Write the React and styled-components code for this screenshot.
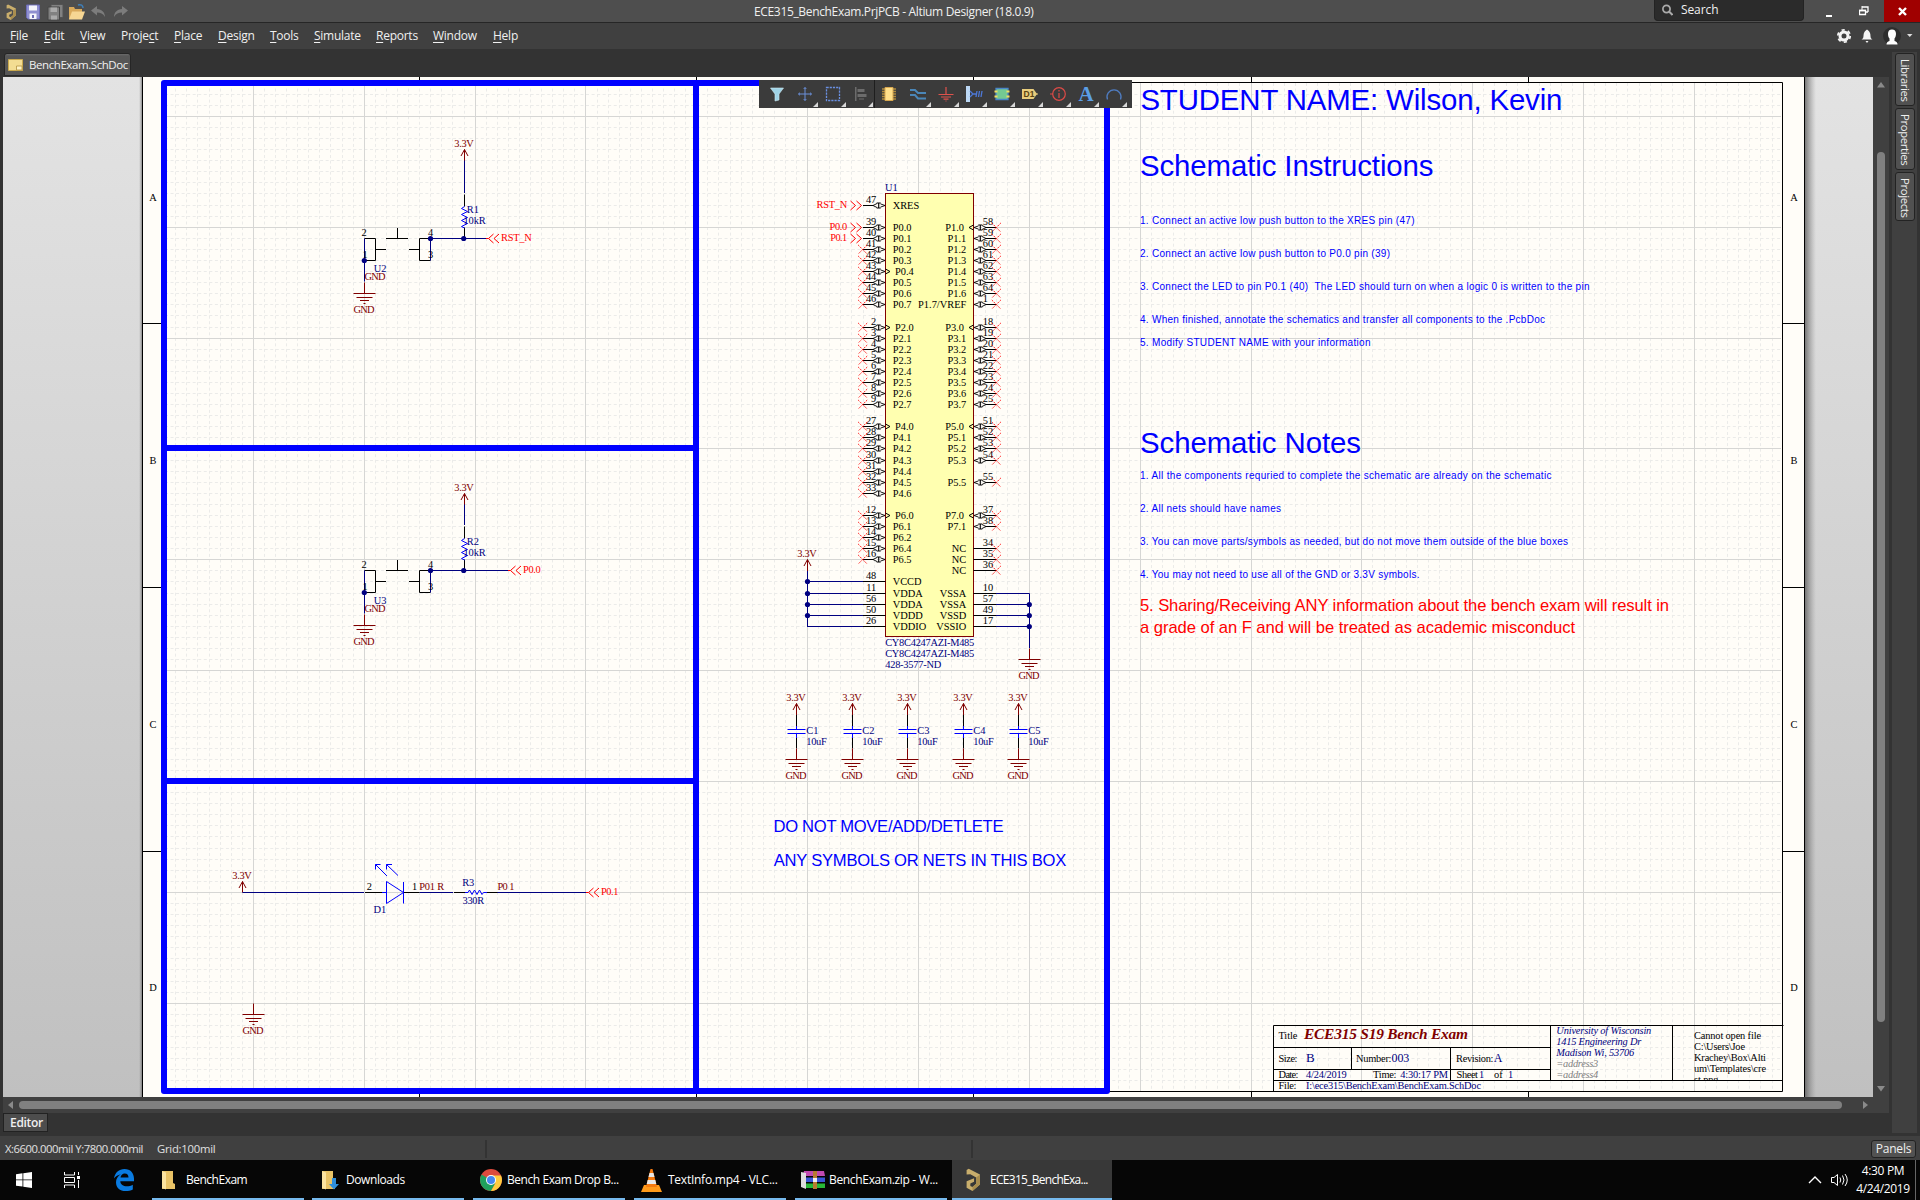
import React from 'react';
import styled, { createGlobalStyle } from 'styled-components';

const Global = createGlobalStyle`
  * { box-sizing: border-box; }
  body { margin: 0; background: #333; overflow: hidden; }
`;

const Screen = styled.div`
  width: 1920px;
  height: 1200px;
  display: flex;
  flex-direction: column;
  background: #333;
  color: #f0f0f0;
  font: 12px/16px "Open Sans", "Noto Sans", sans-serif;
  letter-spacing: -0.3px;
  white-space: nowrap;
  overflow: hidden;
`;

/* ---------- title bar ---------- */

const TitleBar = styled.header`
  height: 23px;
  flex: none;
  display: grid;
  grid-template-columns: 754px 1fr auto;
  background: #4e4e4e;
  border-bottom: 1px solid #262626;
`;
const QuickBar = styled.div`
  display: flex;
  align-items: center;
  padding-left: 3px;
`;
const QuickIcon = styled.svg`
  width: ${(p) => p.$w || 22}px;
  height: 18px;
  flex: none;
`;
const WindowTitle = styled.div`
  line-height: 23px;
  letter-spacing: -0.34px;
`;
const TitleRight = styled.div`
  display: flex;
  height: 22px;
`;
const SearchBox = styled.div`
  width: 150px;
  height: 21px;
  display: flex;
  align-items: center;
  gap: 8px;
  padding: 0 0 1px 7px;
  background: #2b2b2b;
  border: 1px solid #232323;
  border-top: 0;
  border-radius: 0 0 4px 4px;
  letter-spacing: -0.1px;
  margin-right: 10px;
`;
const WinButton = styled.div`
  width: ${(p) => p.$w}px;
  height: 22px;
  display: flex;
  align-items: center;
  justify-content: center;
  background: ${(p) => p.$bg || 'transparent'};
`;

/* ---------- menu bar ---------- */

const MenuBar = styled.nav`
  height: 26px;
  flex: none;
  display: flex;
  align-items: center;
  justify-content: space-between;
  padding: 0 4px 0 10px;
  background: #404040;
`;
const MenuList = styled.div`
  display: flex;
  gap: 16px;
`;
const MenuItem = styled.span`
  width: ${(p) => p.$w}px;
  letter-spacing: -0.25px;
  u { text-underline-offset: 2px; text-decoration-thickness: 1px; }
`;
const UserTools = styled.div`
  display: flex;
  align-items: center;
  height: 26px;
`;

/* ---------- workspace ---------- */

const Workspace = styled.div`
  height: 1087px;
  flex: none;
  display: flex;
`;
const Main = styled.div`
  width: 1889px;
  display: flex;
  flex-direction: column;
`;
const TabStrip = styled.div`
  height: 28px;
  flex: none;
  padding: 4px 0 0 4px;
`;
const DocTab = styled.div`
  width: 127px;
  height: 23px;
  display: flex;
  align-items: center;
  gap: 6px;
  padding-left: 3px;
  border: 1px solid #262626;
  border-radius: 3px 3px 0 0;
  background: linear-gradient(#6a6a6a 0, #575757 2px, #565656 100%);
  font-size: 11.5px;
  letter-spacing: -0.42px;
`;
const View = styled.div`
  height: 1036px;
  flex: none;
  display: grid;
  grid-template-columns: 1870px 16px;
  grid-template-rows: 1020px 16px;
  padding-left: 3px;
  box-sizing: content-box;
`;
const Canvas = styled.div`
  position: relative;
  background: linear-gradient(#e3e3e3, #c0c0c0);
  overflow: hidden;
`;
const Sheet = styled.svg`
  display: block;
  width: 1870px;
  height: 1020px;
`;
const VScroll = styled.div`
  grid-row: 1 / 3;
  grid-column: 2;
  background: #404040;
  display: flex;
  flex-direction: column;
  align-items: center;
  padding-top: 5px;
`;
const VThumb = styled.div`
  width: 8px;
  height: 870px;
  flex: none;
  margin: 64px 0;
  border-radius: 4px;
  background: #808080;
`;
const HScroll = styled.div`
  background: #404040;
  display: flex;
  align-items: center;
  padding-left: 4px;
`;
const HThumb = styled.div`
  width: 1823px;
  height: 8px;
  flex: none;
  margin: 0 21px 0 4px;
  border-radius: 4px;
  background: #808080;
`;
const Arrow = styled.svg`
  width: 8px;
  height: 6px;
  flex: none;
  overflow: visible;
`;
const EditorStrip = styled.div`
  height: 23px;
  padding-left: 3px;
`;
const EditorTab = styled.div`
  width: 45px;
  height: 19px;
  line-height: 17px;
  padding-left: 6px;
  border: 1px solid #222;
  background: #4d4d4d;
  font-weight: 600;
  letter-spacing: -0.3px;
`;
const SideBar = styled.aside`
  width: 25px;
  height: 1081px;
  margin: 3px 0 0 3px;
  padding: 1px 2px 0 3px;
  background: #404040;
  display: flex;
  flex-direction: column;
  gap: 2px;
`;
const SideTab = styled.div`
  width: 20px;
  height: ${(p) => p.$h}px;
  writing-mode: vertical-rl;
  line-height: 17px;
  padding-top: 5px;
  border: 1px solid #232323;
  border-radius: 3px;
  background: #515151;
  font-size: 11.3px;
  letter-spacing: -0.35px;
`;

/* ---------- floating toolbar ---------- */

const ToolBar = styled.div`
  position: absolute;
  left: 756px;
  top: 3px;
  width: 373px;
  height: 28px;
  display: flex;
  padding-left: 4px;
  background: #3b3b3b;
`;
const Tool = styled.div`
  width: 28.1px;
  height: 28px;
  position: relative;
  display: flex;
  align-items: center;
  justify-content: center;
  border-right: ${(p) => (p.$sep ? '1px solid #1e1e1e' : '0')};
  &::after {
    content: '';
    display: ${(p) => (p.$menu ? 'block' : 'none')};
    position: absolute;
    right: 1px;
    bottom: 1px;
    border-left: 5px solid transparent;
    border-bottom: 5px solid #d8d8d8;
  }
`;

/* ---------- status bar ---------- */

const StatusBar = styled.div`
  height: 24px;
  flex: none;
  display: flex;
  align-items: center;
  padding: 1px 4px 0 5px;
  background: #404040;
`;
const StatusText = styled.span`
  width: ${(p) => p.$w}px;
  color: #e0e0e0;
  font-size: 11.3px;
  letter-spacing: ${(p) => p.$ls}px;
`;
const Divider = styled.i`
  width: 2px;
  height: 18px;
  margin-right: ${(p) => p.$mr}px;
  background: #333;
`;
const PanelsButton = styled.div`
  width: 45px;
  height: 18px;
  margin-left: auto;
  line-height: 16px;
  text-align: center;
  border: 1px solid #222;
  border-radius: 3px;
  background: #525252;
  letter-spacing: -0.2px;
`;

/* ---------- task bar ---------- */

const TaskBar = styled.footer`
  height: 40px;
  flex: none;
  display: flex;
  align-items: stretch;
  background: #060606;
  color: #fff;
`;
const TaskIcon = styled.div`
  width: ${(p) => p.$w}px;
  display: flex;
  align-items: center;
  justify-content: center;
`;
const TaskItem = styled.div`
  width: ${(p) => p.$w}px;
  margin-right: ${(p) => p.$mr}px;
  display: flex;
  align-items: center;
  gap: ${(p) => p.$gap}px;
  padding: 2px 0 0 ${(p) => p.$pl}px;
  border-bottom: 2px solid #76b9ed;
  background: ${(p) => (p.$active ? '#383838' : 'transparent')};
  letter-spacing: ${(p) => p.$ls}px;
`;
const Tray = styled.div`
  margin-left: auto;
  display: flex;
  align-items: center;
`;
const Clock = styled.div`
  width: 64px;
  text-align: center;
  line-height: 18px;
  letter-spacing: -0.35px;
`;
const ShowDesktop = styled.div`
  width: 5px;
  height: 40px;
  border-left: 1px solid #666;
`;

/* ---------- schematic primitives ---------- */

const NAVY = '#000080';
const BLUE = '#0000ff';
const MAROON = '#800000';
const RED = '#ff0000';
const U = 11.085;
const snap = (v) => Math.floor(v) + 0.5;

const Txt = styled.text`
  font-family: ${(p) => (p.$sans ? '"Liberation Sans", Arial, sans-serif' : '"Liberation Serif", "Times New Roman", serif')};
  font-size: ${(p) => p.$size || 10.4}px;
  font-style: ${(p) => (p.$italic ? 'italic' : 'normal')};
  font-weight: ${(p) => (p.$bold ? 700 : 400)};
  letter-spacing: 0;
  white-space: pre;
`;
const T = ({ x, y, c = '#000', w, a, children, ...rest }) => (
  <Txt x={x} y={y} fill={c} textAnchor={a} textLength={w} {...rest}>{children}</Txt>
);
const L = ({ d, c = '#000', w = 1 }) => <path d={d} fill="none" stroke={c} strokeWidth={w} />;
const Dot = ({ x, y }) => <circle cx={x} cy={y} r="2.6" fill={NAVY} />;

function Grid() {
  const minor = [];
  for (let i = -8; i < 146; i++) {
    const x = snap(253.4 + i * U);
    if (i % 10 && x > 166 && x < 1781) minor.push(`M${x} 83V1091`);
  }
  for (let i = -3; i < 88; i++) {
    const y = snap(116.4 + i * U);
    if (i % 10 && y > 84 && y < 1090) minor.push(`M165 ${y}H1781`);
  }
  const major = [];
  for (let i = 0; i < 14; i++) major.push(`M${snap(253.4 + i * 10 * U)} 83V1091`);
  for (let i = 0; i < 9; i++) major.push(`M165 ${snap(116.4 + i * 10 * U)}H1781`);
  return (
    <>
      <path d={minor.join('')} stroke="#ebebe9" strokeDasharray="3 2.54" fill="none" />
      <path d={major.join('')} stroke="#d6d6d4" fill="none" />
    </>
  );
}

function Power({ x, y, len = 11.5 }) {
  return (
    <>
      <T x={x - 0.4} y={y - 2.6} c={MAROON} a="middle" w={19.5}>3.3V</T>
      <L c={MAROON} d={`M${x} ${y}V${y + len}M${x - 3.5} ${y + 6.5}L${x} ${y}L${x + 3.5} ${y + 6.5}`} />
    </>
  );
}

function Ground({ x, y }) {
  return (
    <>
      <L c={MAROON} d={`M${x} ${y - 11}V${y}M${x - 11} ${y}h22M${x - 8} ${y + 4}h16M${x - 4.5} ${y + 7}h9M${x - 1} ${y + 10}h2`} />
      <T x={x - 0.4} y={y + 19.4} c={MAROON} a="middle" w={21}>GND</T>
    </>
  );
}

function PortIn({ x, y, name, w }) {
  return (
    <>
      <L c={RED} d={`M${x} ${y}h2.5M${x + 7.5} ${y - 4.5}l-5 4.5l5 4.5M${x + 13} ${y - 4.5}l-5 4.5l5 4.5`} />
      <T x={x + 15} y={y + 2.8} c={RED} w={w}>{name}</T>
    </>
  );
}

function PortOut({ x, y, name, w }) {
  return (
    <>
      <L c={RED} d={`M${x} ${y}l-5 4.5M${x} ${y}l-5 -4.5M${x - 6} ${y}l-5 4.5M${x - 6} ${y}l-5 -4.5`} />
      <T x={x - 14.3} y={y + 2.8} c={RED} a="end" w={w}>{name}</T>
    </>
  );
}

function Button({ dy, powerY, portX, port, portW, r, u }) {
  const y = snap(238.3 + dy);
  return (
    <>
      <Power x={464.5} y={powerY} />
      <L c={NAVY} d={`M464.5 ${powerY + 11}V${y - 45.5}`} />
      <L d={`M464.5 ${y - 44}V${y - 32}M464.5 ${y - 11}V${y}`} />
      <L c={BLUE} d={`M464.5 ${y - 32}l-3 2l6 3l-6 3l6 3l-6 3l6 3l-6 3l3 1.5`} />
      <T x={466.8} y={y - 26} c={NAVY}>{r}</T>
      <T x={463.6} y={y - 14.4} c={NAVY} w={22}>10kR</T>
      <L d={`M364.5 ${y}h11v22h-11M375.5 ${y + 11}h10.5M386 ${y}h22M397.5 ${y}v-10.5M409 ${y + 11}h10.5M430.5 ${y}h-11v22h11`} />
      <L c={NAVY} d={`M364.5 ${y}V${y + 43}M430.5 ${y + 22}V${y}H${portX}`} />
      <T x={364} y={y - 2.8} a="middle">2</T>
      <T x={365} y={y + 19} a="middle">1</T>
      <T x={430.6} y={y - 2.8} a="middle">4</T>
      <T x={430.6} y={y + 19} a="middle">3</T>
      <Dot x={364.3} y={y + 22} />
      <Dot x={430.5} y={y} />
      <Dot x={463.7} y={y} />
      <T x={373.7} y={y + 33.5} c={NAVY}>{u}</T>
      <T x={364.4} y={y + 41.3} c={MAROON} w={21}>GND</T>
      <Ground x={364.5} y={y + 55} />
      <PortIn x={portX} y={y} name={port} w={portW} />
    </>
  );
}

const LEFT = [
  [1, 'XRES', 47, 'p'], [3, 'P0.0', 39, 'p'], [4, 'P0.1', 40, 'p'], [5, 'P0.2', 41], [6, 'P0.3', 42], [7, 'P0.4', 43, 'c'],
  [8, 'P0.5', 44], [9, 'P0.6', 45], [10, 'P0.7', 46], [12, 'P2.0', 2, 'c'], [13, 'P2.1', 3], [14, 'P2.2', 4],
  [15, 'P2.3', 5], [16, 'P2.4', 6], [17, 'P2.5', 7], [18, 'P2.6', 8], [19, 'P2.7', 9], [21, 'P4.0', 27, 'c'],
  [22, 'P4.1', 28], [23, 'P4.2', 29], [24, 'P4.3', 30], [25, 'P4.4', 31], [26, 'P4.5', 32], [27, 'P4.6', 33],
  [29, 'P6.0', 12, 'c'], [30, 'P6.1', 13], [31, 'P6.2', 14], [32, 'P6.4', 15], [33, 'P6.5', 16],
  [35, 'VCCD', 48, 'w'], [36, 'VDDA', 11, 'w'], [37, 'VDDA', 56, 'w'], [38, 'VDDD', 50, 'w'], [39, 'VDDIO', 26, 'w'],
];
const RIGHT = [
  [3, 'P1.0', 58, 'c'], [4, 'P1.1', 59], [5, 'P1.2', 60], [6, 'P1.3', 61], [7, 'P1.4', 62], [8, 'P1.5', 63], [9, 'P1.6', 64],
  [10, 'P1.7/VREF', 1], [12, 'P3.0', 18, 'c'], [13, 'P3.1', 19], [14, 'P3.2', 20], [15, 'P3.3', 21], [16, 'P3.4', 22],
  [17, 'P3.5', 23], [18, 'P3.6', 24], [19, 'P3.7', 25], [21, 'P5.0', 51, 'c'], [22, 'P5.1', 52], [23, 'P5.2', 53],
  [24, 'P5.3', 54], [26, 'P5.5', 55], [29, 'P7.0', 37, 'c'], [30, 'P7.1', 38], [32, 'NC', 34, 'n'], [33, 'NC', 35, 'n'],
  [34, 'NC', 36, 'n'], [36, 'VSSA', 10, 'w'], [37, 'VSSA', 57, 'w'], [38, 'VSSD', 49, 'w'], [39, 'VSSIO', 17, 'w'],
];
const rowY = (n) => snap(194 + n * U);

function NoErc({ x, y }) {
  return (
    <path d={`M${x - 4.5} ${y - 4.5}l9 9M${x + 4.5} ${y - 4.5}l-9 9`} stroke={RED} strokeWidth="1" strokeDasharray="1.5 1.1" fill="none" />
  );
}

function Pin({ side, row, name, num, kind }) {
  const y = rowY(row);
  const s = side === 'l' ? -1 : 1;
  const x = side === 'l' ? 885.5 : 973.5;
  const io = kind !== 'w' && kind !== 'n';
  const clk = kind === 'c' ? 2.3 : 0;
  return (
    <>
      <T x={x - s * (7.2 + clk)} y={y + 3.2} a={s < 0 ? 'start' : 'end'}>{name}</T>
      <T x={x + s * 9.2} y={y - 2.6} a={s < 0 ? 'end' : 'start'}>{num}</T>
      <L d={`M${x + s * 22.5} ${y}H${io ? x + s * 12 : x}`} />
      {io && (
        <>
          <path d={`M${x + s * 8.5} ${y - 2}L${x + s * 12.5} ${y}L${x + s * 8.5} ${y + 2}M${x + s * 5} ${y - 1.6}L${x + s * 0.5} ${y}L${x + s * 5} ${y + 1.6}`} fill="#fffdf8" stroke="#000" strokeWidth=".9" />
          <path d={`M${x + s * 6.8} ${y - 2.5}v5M${x + s * 6.8 - 2} ${y - 2.5}h4M${x + s * 6.8 - 2} ${y + 2.5}h4`} stroke="#000" strokeWidth="1.100" />
        </>
      )}
      {clk > 0 && <L d={`M${x} ${y - 2.5}L${x - s * 4.5} ${y}L${x} ${y + 2.5}`} />}
      {(kind === undefined || kind === 'c' || kind === 'n') && <NoErc x={x + s * 22.8} y={y} />}
    </>
  );
}

function Chip() {
  const wiresL = [35, 36, 37, 38, 39].map((n) => `M807.5 ${rowY(n)}H863`).join('');
  const wiresR = [36, 37, 38, 39].map((n) => `M996 ${rowY(n)}H1029.5`).join('');
  return (
    <>
      <rect x="885.5" y="193.5" width="88" height="443" fill="#ffffb0" stroke={MAROON} />
      <T x={885} y={190.5} c={NAVY}>U1</T>
      {LEFT.map((p) => <Pin key={p[2]} side="l" row={p[0]} name={p[1]} num={p[2]} kind={p[3]} />)}
      {RIGHT.map((p) => <Pin key={p[2]} side="r" row={p[0]} name={p[1]} num={p[2]} kind={p[3]} />)}
      <PortOut x={861.5} y={rowY(1)} name="RST_N" w={30.7} />
      <PortOut x={861.5} y={rowY(3)} name="P0.0" w={17.7} />
      <PortOut x={861.5} y={rowY(4)} name="P0.1" w={17} />
      <Power x={807.5} y={559.5} />
      <L c={NAVY} d={`M807.5 571V${rowY(39) + 0.5}${wiresL}${wiresR}M1029.5 ${rowY(36)}V648`} />
      {[35, 36, 37, 38].map((n) => <Dot key={n} x={807.5} y={rowY(n)} />)}
      {[37, 38, 39].map((n) => <Dot key={n} x={1029.3} y={rowY(n)} />)}
      <Ground x={1029.5} y={659.5} />
      <T x={885.2} y={646.2} c={NAVY} w={89}>CY8C4247AZI-M485</T>
      <T x={885.2} y={657.2} c={NAVY} w={89}>CY8C4247AZI-M485</T>
      <T x={885.2} y={668} c={NAVY} w={56}>428-3577-ND</T>
    </>
  );
}

function Cap({ x, name }) {
  return (
    <>
      <Power x={x} y={703.5} />
      <L d={`M${x} 715V726M${x} 738V748.5`} />
      <L c={BLUE} d={`M${x} 726V729.5M${x - 9} 729.5h18M${x - 9} 733.5h18M${x} 733.5V738`} />
      <Ground x={x} y={759.5} />
      <T x={x + 9.8} y={733.6} c={NAVY}>{name}</T>
      <T x={x + 9.8} y={744.6} c={NAVY} w={20.5}>10uF</T>
    </>
  );
}

function LedCircuit() {
  return (
    <>
      <Power x={242.5} y={881.5} len={11} />
      <L c={NAVY} d="M242.5 892.5H364M419.5 892.5H453M497 892.5H586" />
      <L d="M365 892.5H382M404 892.5H419.5M454 892.5H465M487 892.5H497.5" />
      <L c={BLUE} d="M382 892.5H386.5M386.5 881.5V903.5L403.5 892.5L386.5 881.5M403.5 882V903.5M465 892.5h3l1.5 -2.5l2.5 4.5l2.5 -4.5l2.5 4.5l2.5 -4.5l2.5 4.5l1.5 -2h3.5" />
      <L c={BLUE} d="M387 876L375.5 864.5M380.5 864.5H375.5V869.5M398 875.5L386.5 864.5M392 864.5H386.5V869.5" />
      <T x={366.7} y={889.8}>2</T>
      <T x={412} y={889.8}>1</T>
      <T x={419.2} y={889.8} c={MAROON} w={25}>P01 R</T>
      <T x={462.2} y={886.3} c={NAVY}>R3</T>
      <T x={462.6} y={904} c={NAVY} w={21.5}>330R</T>
      <T x={497.4} y={889.9} c={MAROON} w={17}>P0 1</T>
      <T x={373.5} y={913} c={NAVY}>D1</T>
      <PortIn x={586} y={892.5} name="P0.1" w={17.5} />
      <Ground x={253.5} y={1014.5} />
    </>
  );
}

const SMALL = [
  [224, 274.5, '1. Connect an active low push button to the XRES pin (47)'],
  [257, 250, '2. Connect an active low push button to P0.0 pin (39)'],
  [290, 449.5, '3. Connect the LED to pin P0.1 (40)  The LED should turn on when a logic 0 is written to the pin'],
  [323, 405, '4. When finished, annotate the schematics and transfer all components to the .PcbDoc'],
  [346, 230.5, '5. Modify STUDENT NAME with your information'],
  [479, 411.5, '1. All the components requried to complete the schematic are already on the schematic'],
  [512, 141, '2. All nets should have names'],
  [545, 428, '3. You can move parts/symbols as needed, but do not move them outside of the blue boxes'],
  [578, 279.5, '4. You may not need to use all of the GND or 3.3V symbols.'],
];

function Notes() {
  return (
    <>
      <T $sans $size={29.4} x={1140.4} y={110} c={BLUE} w={422}>STUDENT NAME: Wilson, Kevin</T>
      <T $sans $size={29.4} x={1140} y={176} c={BLUE} w={293.5}>Schematic Instructions</T>
      <T $sans $size={29.4} x={1140} y={453} c={BLUE} w={221}>Schematic Notes</T>
      {SMALL.map(([y, w, s]) => <T key={s} $sans $size={10} x={1140} y={y} c={BLUE} w={w}>{s}</T>)}
      <T $sans $size={16.6} x={1140} y={611} c={RED} w={529}>5. Sharing/Receiving ANY information about the bench exam will result in</T>
      <T $sans $size={16.6} x={1140} y={633} c={RED} w={435}>a grade of an F and will be treated as academic misconduct</T>
      <T $sans $size={16.6} x={773.5} y={832.3} c={BLUE} w={230}>DO NOT MOVE/ADD/DETLETE</T>
      <T $sans $size={16.6} x={773.8} y={866} c={BLUE} w={292.5}>ANY SYMBOLS OR NETS IN THIS BOX</T>
    </>
  );
}

function TitleBlock() {
  return (
    <>
      <L d="M1273.5 1091.5V1025.5H1783.5M1273.5 1047.5H1550.5M1273.5 1069.5H1550.5M1273.5 1080.5H1782.5M1351.5 1047.5V1069.5M1450.5 1047.5V1080.5M1550.5 1025.5V1080.5M1672.5 1025.5V1080.5" />
      <T x={1278.5} y={1039.3} w={18.8}>Title</T>
      <T x={1304} y={1039.3} $size={15.4} $bold $italic c={MAROON} w={164}>ECE315 S19 Bench Exam</T>
      <T x={1278.5} y={1061.7} w={19}>Size:</T>
      <T x={1306} y={1062.3} $size={13} c={NAVY}>B</T>
      <T x={1356} y={1061.7} w={35.5}>Number:</T>
      <T x={1391.6} y={1062} $size={12} c={NAVY} w={17.6}>003</T>
      <T x={1456} y={1061.7} w={37.5}>Revision:</T>
      <T x={1493.7} y={1062} $size={12} c={NAVY}>A</T>
      <T x={1278.5} y={1078} w={20}>Date:</T>
      <T x={1306} y={1078} c={NAVY} w={40.7}>4/24/2019</T>
      <T x={1373} y={1078} w={23.5}>Time:</T>
      <T x={1400.3} y={1078} c={NAVY} w={47.7}>4:30:17 PM</T>
      <T x={1456.5} y={1078} w={21.5}>Sheet</T>
      <T x={1479} y={1078} c={NAVY}>1</T>
      <T x={1494} y={1078}>of</T>
      <T x={1508} y={1078} c={NAVY}>1</T>
      <T x={1278.5} y={1089} w={18}>File:</T>
      <T x={1306} y={1089} c={NAVY} w={175}>{'I:\\ece315\\BenchExam\\BenchExam.SchDoc'}</T>
      <T x={1556.3} y={1034.3} $italic c={NAVY} w={95}>University of Wisconsin</T>
      <T x={1556.3} y={1045.3} $italic c={NAVY} w={85}>1415 Engineering Dr</T>
      <T x={1556.3} y={1056.3} $italic c={NAVY} w={78}>Madison Wi, 53706</T>
      <T x={1556.3} y={1067} $italic c="#808080" w={42}>=address3</T>
      <T x={1556.3} y={1078} $italic c="#808080" w={42}>=address4</T>
      <T x={1694} y={1038.8} w={67}>Cannot open file</T>
      <T x={1694} y={1050} w={51}>{'C:\\Users\\Joe'}</T>
      <T x={1694} y={1061} w={72}>{'Krachey\\Box\\Alti'}</T>
      <T x={1694} y={1072.3} w={72}>{'um\\Templates\\cre'}</T>
      <g clipPath="url(#pathClip)"><T x={1694} y={1083} w={24.5}>st.png</T></g>
    </>
  );
}

function Schematic() {
  const zonesX = [419.5, 696.5, 973.5, 1251.5, 1528.5];
  const zonesY = [323.5, 587.5, 851.5];
  return (
    <Sheet viewBox="3 77 1870 1020">
      <defs>
        <linearGradient id="shR"><stop offset="0" stopColor="#555" stopOpacity=".75" /><stop offset="1" stopColor="#888" stopOpacity="0" /></linearGradient>
        <linearGradient id="shL"><stop offset="0" stopColor="#888" stopOpacity="0" /><stop offset="1" stopColor="#555" stopOpacity=".6" /></linearGradient>
        <clipPath id="pathClip"><rect x="1690" y="1070" width="90" height="10" /></clipPath>
      </defs>
      <rect x="1805" y="77" width="11" height="1020" fill="url(#shR)" />
      <rect x="139" y="77" width="3" height="1020" fill="url(#shL)" />
      <rect x="142" y="77" width="1663" height="1020" fill="#fffdf8" />
      <Grid />
      <L d="M142.5 77V1097M1804.5 77V1097M164 82.5H1782.5V1091.5H164" />
      <L d={zonesX.map((x) => `M${x} 77V82M${x} 1091V1097`).join('') + zonesY.map((y) => `M143 ${y}H164M1782 ${y}H1804`).join('')} />
      {[['A', 200.8], ['B', 464], ['C', 727.7], ['D', 991]].map(([s, y]) => (
        <React.Fragment key={s}>
          <T x={153} y={y} a="middle">{s}</T>
          <T x={1794} y={y} a="middle">{s}</T>
        </React.Fragment>
      ))}
      <path d="M164 83H1107V1091H164ZM696 83V1091M164 448H696M164 781H696" fill="none" stroke={BLUE} strokeWidth="6" strokeLinejoin="round" />
      <Button dy={0} powerY={149.5} portX={486} port="RST_N" portW={30.7} r="R1" u="U2" />
      <Button dy={332.5} powerY={493.5} portX={508} port="P0.0" portW={17.7} r="R2" u="U3" />
      <LedCircuit />
      <Chip />
      {[796.5, 852.5, 907.5, 963.5, 1018.5].map((x, i) => <Cap key={x} x={x} name={`C${i + 1}`} />)}
      <Notes />
      <TitleBlock />
    </Sheet>
  );
}

/* ---------- icons ---------- */

const AltiumShape = () => (
  <>
    <path d="M1.500 6V1.800L3.500.8 14 6.200V15.500L7 21.500 1.500 18.500V12.500L8.500 9.500V12.800L5 14.500V16.800L7 17.800 10.500 14.800V8.800L5 5.800z" fill="#c9ae6c" />
    <path d="M10.500 8.800L14 6.200V15.500L7 21.500V17.800L10.500 14.800z" fill="#a98d4e" />
  </>
);
const AltiumLogo = ({ w }) => (
  <svg width={w} height={w * 1.5} viewBox="0 0 15 22.500"><AltiumShape /></svg>
);

const Floppy = ({ c, b }) => (
  <g>
    <path d="M.5.5h13v14H2L.5 13z" fill={c} stroke={b} />
    <path d="M3 1h8v5H3z" fill="#f4f4fa" />
    <path d="M3.500 9h7v5.500h-7z" fill="#f4f4fa" />
    <path d="M6 10.500h2v3H6z" fill={b} />
  </g>
);

const Folder = ({ arrow }) => (
  <svg width={arrow ? 19 : 15} height="20" viewBox={`0 0 ${arrow ? 19 : 15} 20`}>
    <path d="M1 1h11v12l2 1v5H1z" fill="#e9c366" />
    <path d="M1 1l4 1.500V19.500L1 18z" fill="#fbe3a0" />
    {arrow && <path d="M11 8h4v6h3l-5 5.500L8 14h3z" fill="#2f8fdc" />}
  </svg>
);

const tools = [
  ['filter', <path key="a" d="M1.500 2h13L10 8v6l-4 1V8z" fill="#9fd3e6" stroke="#cfe9f2" strokeWidth=".6" />],
  ['cross', <path key="a" d="M8 1.500v13M1.500 8h13M6.700 3L8 1.500 9.300 3M6.700 13L8 14.500 9.300 13M3 6.700L1.500 8 3 9.300M13 6.700L14.500 8 13 9.300" fill="none" stroke="#6a8fd8" strokeWidth="1" />, 1],
  ['select', <path key="a" d="M1.500 1.500h13v13h-13z" fill="none" stroke="#6a8fe0" strokeWidth="1.300" strokeDasharray="2.200 1" />, 1],
  ['align', <g key="a" fill="#6c6c6c"><path d="M2 1h1.500v14H2zM4.500 3h7v3h-7zM4.500 8h9v3h-9z" /><path d="M6 13h5" stroke="#6c6c6c" /></g>, 1, 1],
  ['part', <g key="a"><path d="M1 3h14M1 5.500h14M1 8h14M1 10.500h14M1 13h14" stroke="#b08a3c" strokeWidth="1.300" /><path d="M4 1.500h8v13H4z" fill="#ffdf8a" stroke="#d8a850" /></g>],
  ['wire', <path key="a" d="M0 4h5l3 3h8M0 9h5l3 3.500h8" fill="none" stroke="#4a86b8" strokeWidth="2" />, 1],
  ['gnd', <path key="a" d="M8 1v7M.5 8.500h15M3 11h10M5.500 13.200h5M7.500 15h1" stroke="#e0524c" strokeWidth="1.200" />, 1],
  ['port', <g key="a"><path d="M0 0h4v16H0z" fill="#bcd8f5" /><path d="M4 5l3 3-3 3M7 8h3M10 11l1-6M12.500 11l1-6M15 11l1-6" stroke="#4d78d8" fill="none" strokeWidth="1.300" /></g>, 1],
  ['sheet', <g key="a"><path d="M2 2.500h12v11H2z" fill="#74c992" stroke="#4a86c8" strokeWidth="1.300" /><path d="M.5 4.500h3v2h-3zM.5 9.500h3v2h-3zM12.500 4.500h3v2h-3zM12.500 9.500h3v2h-3z" fill="#f0e060" /></g>, 1],
  ['net', <g key="a"><path d="M0 3h11.500l3.500 5-3.500 5H0z" fill="#e8cd7c" /><path d="M14 8h2" stroke="#e8cd7c" /><text x="1.500" y="11" fontSize="8.500" fontWeight="700" fill="#5a4210" fontFamily="Liberation Sans, sans-serif" letterSpacing="0">D1</text></g>, 1],
  ['info', <g key="a" fill="none" stroke="#dd4b47" strokeWidth="1.200"><circle cx="9" cy="8" r="6.300" /><path d="M0 8h3M9 7v5M9 4v1.500" /></g>, 1],
  ['text', <text key="a" x="8" y="15" textAnchor="middle" fontSize="21" fontWeight="700" fill="#5b9fe6" fontFamily="Liberation Serif, serif">A</text>, 1],
  ['arc', <path key="a" d="M1.500 13.500A7 7 0 1 1 14.500 13.500" fill="none" stroke="#4f7cc0" strokeWidth="1.300" />, 1],
];

const menus = [
  ['', 'F', 'ile', 18], ['', 'E', 'dit', 20], ['', 'V', 'iew', 25], ['Proje', 'c', 't', 37], ['', 'P', 'lace', 28],
  ['', 'D', 'esign', 36], ['', 'T', 'ools', 28], ['', 'S', 'imulate', 46], ['', 'R', 'eports', 41], ['', 'W', 'indow', 44], ['', 'H', 'elp', 26],
];

export default function App() {
  return (
    <>
      <Global />
      <Screen>
        <TitleBar>
          <QuickBar>
            <QuickIcon viewBox="-2 0 19 18" $w={19}><g transform="translate(.5 1) scale(.74)"><AltiumShape /></g></QuickIcon>
            <QuickIcon viewBox="-4 -1.500 22 18"><Floppy c="#8f8fd0" b="#6b6bb5" /></QuickIcon>
            <QuickIcon viewBox="-3 -1.500 22 18"><g opacity=".85"><path d="M4 0h12v13H4z" fill="#8a8a8a" stroke="#555" /><path d="M1 2.500h11.500v13H1z" fill="#8a8a8a" stroke="#444" /><path d="M3.500 3h6.500v4.500H3.500zM4 11h6v4H4z" fill="#bbb" /></g></QuickIcon>
            <QuickIcon viewBox="-3 -1 22 18"><path d="M0 3h5l1 2h7v10H0z" fill="#d9a95a" /><path d="M3 7.500h13l-3 8H0z" fill="#f6d693" /><path d="M9 1c3-1 5 .5 5 3" stroke="#3f7fb8" fill="none" strokeWidth="1.500" /></QuickIcon>
            <QuickIcon viewBox="-3 -1 22 18"><path d="M0 6.500L6 2v3c5 .3 8 3.500 8 8-2-3.500-4.500-4.500-8-4.500v3z" fill="#7c7c7c" /></QuickIcon>
            <QuickIcon viewBox="-3 -1 22 18"><path d="M15 6.500L9 2v3c-5 .3-8 3.500-8 8 2-3.500 4.500-4.500 8-4.500v3z" fill="#7c7c7c" /></QuickIcon>
          </QuickBar>
          <WindowTitle>ECE315_BenchExam.PrjPCB - Altium Designer (18.0.9)</WindowTitle>
          <TitleRight>
            <SearchBox>
              <svg width="11" height="12" viewBox="0 0 11 12"><circle cx="4.500" cy="5" r="3.600" fill="none" stroke="#aaa" strokeWidth="1.700" /><path d="M7 7.500l3.500 3.500" stroke="#aaa" strokeWidth="2" /></svg>
              Search
            </SearchBox>
            <WinButton $w={30}><svg width="8" height="14"><path d="M1 12h6" stroke="#fff" strokeWidth="2" /></svg></WinButton>
            <WinButton $w={40}><svg width="10" height="10"><path d="M3 1h6v5M9 6H7M.5 4.500h6v4h-6z" fill="none" stroke="#fff" strokeWidth="1.300" /><path d="M0 4.500h7" stroke="#fff" strokeWidth="1.500" /><path d="M3 0v4" stroke="#fff" /></svg></WinButton>
            <WinButton $w={36} $bg="#a00000"><svg width="9" height="9"><path d="M1 1l7 7M8 1L1 8" stroke="#fff" strokeWidth="2.400" /></svg></WinButton>
          </TitleRight>
        </TitleBar>
        <MenuBar>
          <MenuList>
            {menus.map(([a, u, b, w]) => <MenuItem key={a + u + b} $w={w}>{a}<u>{u}</u>{b}</MenuItem>)}
          </MenuList>
          <UserTools>
            <svg width="80" height="26" viewBox="1836 23 80 26">
              <g fill="none" stroke="#f4f4f4"><circle cx="1844" cy="36" r="4" strokeWidth="3" /><circle cx="1844" cy="36" r="6.200" strokeWidth="1.800" strokeDasharray="3.200 3.290" /></g>
              <path d="M1861.500 39.500c2.300-1 1.800-3 2.200-5.500.3-2 1.500-3 3.300-4.500 1.800 1.500 3 2.500 3.300 4.500.4 2.500-.1 4.500 2.200 5.500zM1865.500 41h3l-1.500 2z" fill="#f4f4f4" />
              <circle cx="1892" cy="36" r="9" fill="#2d2d2d" />
              <path d="M1892 29.500c2.500 0 4 1.500 4 4.200 0 2.300-.8 3.800-1.500 4.800v2.500c2 .5 3 1.500 3 3.500h-11c0-2 1-3 3-3.500v-2.500c-.8-1-1.500-2.500-1.500-4.800 0-2.700 1.500-4.200 4-4.200z" fill="#fff" />
              <path d="M1907 34h5.500l-2.750 3z" fill="#ddd" />
            </svg>
          </UserTools>
        </MenuBar>
        <Workspace>
          <Main>
            <TabStrip>
              <DocTab>
                <svg width="15" height="12"><path d="M.5.5h14v11H.5z" fill="#f3dd92" stroke="#c9a94e" /><path d="M8.500 7h5.500v4H8.500z" fill="#fff4c4" stroke="#b39240" strokeWidth=".8" /></svg>
                BenchExam.SchDoc
              </DocTab>
            </TabStrip>
            <View>
              <Canvas>
                <Schematic />
                <ToolBar>
                  {tools.map(([id, icon, menu, sep]) => (
                    <Tool key={id} $menu={menu} $sep={sep}><svg width="16" height="16" overflow="visible">{icon}</svg></Tool>
                  ))}
                </ToolBar>
              </Canvas>
              <VScroll>
                <Arrow><path d="M0 5.500L4 0l4 5.500z" fill="#8a8a8a" /></Arrow>
                <VThumb />
                <Arrow><path d="M0 0L4 5.500 8 0z" fill="#8a8a8a" /></Arrow>
              </VScroll>
              <HScroll>
                <Arrow><path d="M6 -1L1 3l5 4z" fill="#8a8a8a" /></Arrow>
                <HThumb />
                <Arrow><path d="M0 -1L5 3l-5 4z" fill="#8a8a8a" /></Arrow>
              </HScroll>
            </View>
            <EditorStrip><EditorTab>Editor</EditorTab></EditorStrip>
          </Main>
          <SideBar>
            <SideTab $h={53}>Libraries</SideTab>
            <SideTab $h={62}>Properties</SideTab>
            <SideTab $h={49}>Projects</SideTab>
          </SideBar>
        </Workspace>
        <StatusBar>
          <StatusText $w={152} $ls={-0.46}>X:6600.000mil Y:7800.000mil</StatusText>
          <StatusText $w={328} $ls={-0.25}>Grid:100mil</StatusText>
          <Divider $mr={484} />
          <Divider $mr={0} />
          <PanelsButton>Panels</PanelsButton>
        </StatusBar>
        <TaskBar>
          <TaskIcon $w={48}><svg width="16" height="16"><path d="M0 2.200l6.500-.9v6.200H0zM7.300 1.200L16 0v7.500H7.300zM0 8.300h6.500v6.300L0 13.700zM7.300 8.300H16V16l-8.700-1.200z" fill="#fff" /></svg></TaskIcon>
          <TaskIcon $w={48}><svg width="17" height="16"><path d="M.5 0v3h10V0M.5 16v-3h10v3M.5 5.500h10v5H.5zM14.500 0v3M14.500 8v8" stroke="#fff" fill="none" /><path d="M13 4h3v3h-3z" fill="#fff" /></svg></TaskIcon>
          <TaskIcon $w={56}><svg width="20" height="22" viewBox="0 0 20 22"><path d="M0 9.500C1 3.500 5 0 10.500 0 16.500 0 20 4.200 20 9.800v2.500H6.300c.2 3.400 3 5 6.500 5 2.200 0 4.200-.6 6-1.600v4.700c-2 1-4.400 1.600-7.200 1.600C5.800 22 2 18.600 2 13.200 2 10 3.800 7 6.800 5.300 4 6 1.500 7.500 0 9.500zM6.500 8.500h8c0-2.500-1.400-4-3.700-4-2.400 0-4 1.700-4.300 4z" fill="#0a7be0" /></svg></TaskIcon>
          <TaskItem $w={152} $mr={8} $pl={9} $gap={10} $ls={-0.5}><Folder />BenchExam</TaskItem>
          <TaskItem $w={152} $mr={9} $pl={9} $gap={6} $ls={-0.42}><Folder arrow />Downloads</TaskItem>
          <TaskItem $w={152} $mr={9} $pl={7} $gap={5} $ls={-0.44}>
            <svg width="22" height="22" viewBox="-11 -11 22 22"><circle r="11" fill="#dd4b3e" /><path d="M0 0L-9.500-5.500A11 11 0 0 0 0 11l4.500-8z" fill="#1fa15d" /><path d="M0 0l4.500 3L0 11A11 11 0 0 0 10-4.500H0z" fill="#ffcd40" /><circle r="5" fill="#fff" /><circle r="4" fill="#4688f1" /></svg>
            Bench Exam Drop B...
          </TaskItem>
          <TaskItem $w={152} $mr={9} $pl={7} $gap={6} $ls={-0.25}>
            <svg width="21" height="24" viewBox="0 0 21 24"><path d="M3 17h15l3 7H0z" fill="#ff9a1a" /><path d="M9.500 1h2L16 19H5z" fill="#f47a10" /><path d="M8.500 5h4l1 4h-6zM6.700 12h7.600l1 4H5.700z" fill="#e8e8e8" /></svg>
            TextInfo.mp4 - VLC...
          </TaskItem>
          <TaskItem $w={152} $mr={5} $pl={6} $gap={4} $ls={-0.33}>
            <svg width="24" height="18" viewBox="0 0 24 18"><path d="M3 0h20l1 5H2z" fill="#c04ab0" /><path d="M2 6.500h22V11H2z" fill="#3a55d8" /><path d="M2 12.500h22V17H2z" fill="#28b838" /><path d="M0 1l5 1v16l-5-2z" fill="#ddd" /><path d="M12 0h4v18h-4z" fill="#b87a30" /><path d="M12 7h4v4h-4z" fill="#eee" /></svg>
            BenchExam.zip - W...
          </TaskItem>
          <TaskItem $w={160} $mr={0} $pl={13} $gap={9} $ls={-0.72} $active><AltiumLogo w={16} />ECE315_BenchExa...</TaskItem>
          <Tray>
            <svg width="60" height="20" viewBox="1791 1170 60 20" fill="none" stroke="#fff">
              <path d="M1809 1183l6-6 6 6" strokeWidth="1.400" />
              <path d="M1831.500 1177.500h2.500l3.500-3v11l-3.500-3h-2.500zM1840 1177.500q1.500 2.500 0 5M1842.500 1175.500q3 4.500 0 9M1845 1174q4.500 6 0 12" />
            </svg>
            <Clock>4:30 PM<br />4/24/2019</Clock>
            <ShowDesktop />
          </Tray>
        </TaskBar>
      </Screen>
    </>
  );
}
